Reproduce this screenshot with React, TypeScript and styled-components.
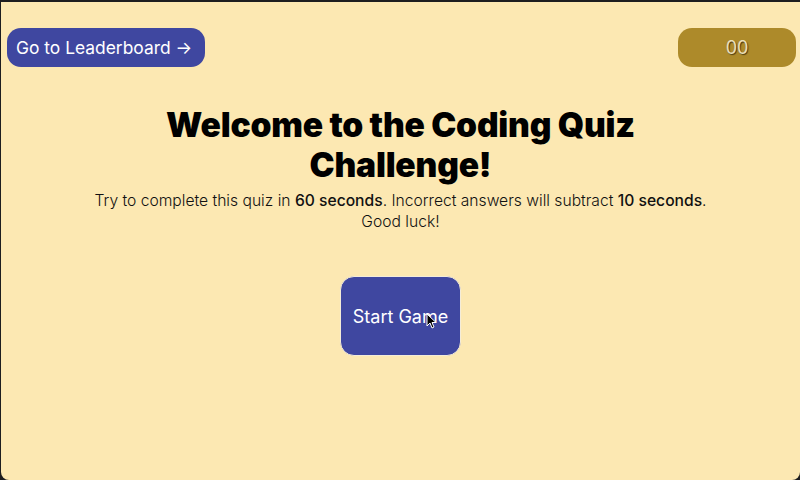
import React from "react";
import styled, { createGlobalStyle } from "styled-components";

const Global = createGlobalStyle`
  html, body { margin: 0; padding: 0; background: #1d1d1f; }
  body { font-family: Inter, "Noto Sans", sans-serif; }
  * { box-sizing: border-box; }
`;

const Frame = styled.div`
  width: 799px;
  height: 478px;
  margin: 2px 0 0 1px;
  background: #fce8b2;
  border-radius: 0 0 8px 8px;
  display: flex;
  flex-direction: column;
  position: relative;
`;

const TopBar = styled.header`
  display: flex;
  justify-content: space-between;
  align-items: center;
  padding: 26px 4px 0 6px;
`;

const LeaderButton = styled.button`
  height: 39px;
  padding: 0 13px 0 9px;
  border: none;
  border-radius: 14px;
  background: #3f47a0;
  color: #fff;
  font-family: Inter, sans-serif;
  font-size: 17.4px;
  font-weight: 400;
  display: flex;
  align-items: center;
  gap: 5px;
  cursor: pointer;
`;

const Timer = styled.div`
  width: 118px;
  height: 39px;
  border-radius: 14px;
  background: #ad8a2a;
  color: #eadfba;
  font-size: 18px;
  display: flex;
  align-items: center;
  justify-content: center;
  text-shadow: 1px 1px 1px #4a3a12;
`;

const Main = styled.main`
  display: flex;
  flex-direction: column;
  align-items: center;
  padding-top: 38px;
`;

const Title = styled.h1`
  margin: 0;
  width: 500px;
  text-align: center;
  font-size: 33.6px;
  font-weight: 900;
  line-height: 40px;
  color: #000;
  letter-spacing: -0.2px;
`;

const Intro = styled.p`
  margin: 5px 0 0;
  width: 720px;
  text-align: center;
  font-size: 15.65px;
  font-weight: 300;
  line-height: 21px;
  color: #111;
  b { font-weight: 500; }
`;

const StartButton = styled.button`
  margin-top: 44px;
  width: 121px;
  height: 80px;
  border: 1px solid #f4ecd8;
  border-radius: 14px;
  background: #3f47a0;
  color: #fff;
  font-family: Inter, sans-serif;
  font-size: 18px;
  font-weight: 400;
  cursor: pointer;
`;

const Cursor = styled.svg`
  position: absolute;
  left: 425px;
  top: 311px;
  width: 11px;
  height: 16px;
`;

export default function App() {
  return (
    <>
      <Global />
      <Frame>
        <TopBar>
          <LeaderButton>Go to Leaderboard <span>→</span></LeaderButton>
          <Timer>00</Timer>
        </TopBar>
        <Main>
          <Title>Welcome to the Coding Quiz Challenge!</Title>
          <Intro>
            Try to complete this quiz in <b>60 seconds</b>. Incorrect answers will subtract <b>10 seconds</b>.
            <br />
            Good luck!
          </Intro>
          <StartButton>Start Game</StartButton>
        </Main>
        <Cursor viewBox="0 0 11 16">
          <path d="M1 1 L1 13 L4 10 L6 15 L8 14 L6 9.5 L10 9.5 Z" fill="#000" stroke="#fff" strokeWidth="1" />
        </Cursor>
      </Frame>
    </>
  );
}
